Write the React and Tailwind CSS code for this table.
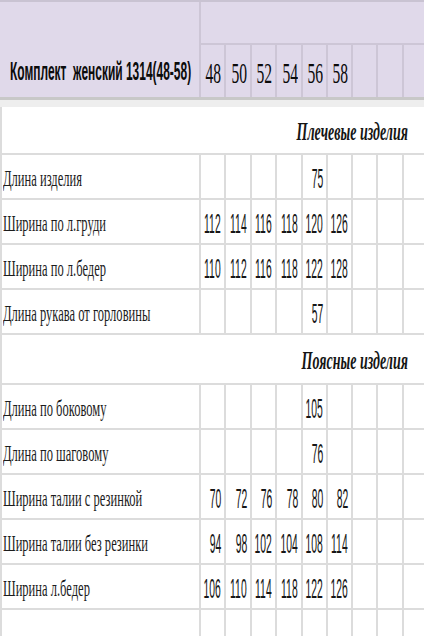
const sizes = ["48", "50", "52", "54", "56", "58"];

const grid = "grid grid-cols-[201px_25px_26px_25px_26px_25px_25px_25px_26px_1fr]";

const shoulder = [
  ["Длина изделия", ["", "", "", "", "75", ""]],
  ["Ширина по л.груди", ["112", "114", "116", "118", "120", "126"]],
  ["Ширина по л.бедер", ["110", "112", "116", "118", "122", "128"]],
  ["Длина рукава от горловины", ["", "", "", "", "57", ""]],
];

const waist = [
  ["Длина по боковому", ["", "", "", "", "105", ""]],
  ["Длина по шаговому", ["", "", "", "", "76", ""]],
  ["Ширина талии с резинкой", ["70", "72", "76", "78", "80", "82"]],
  ["Ширина талии без резинки", ["94", "98", "102", "104", "108", "114"]],
  ["Ширина л.бедер", ["106", "110", "114", "118", "122", "126"]],
];

function DataRow({ label, values, last }) {
  const cells = [...values, "", "", ""];
  return (
    <div className={`${grid} ${last ? "h-[30px]" : "h-[45px]"} border-b-2 border-[#dcdcdc]`}>
      <div className="flex items-center overflow-visible border-l-2 border-r-2 border-[#dcdcdc] pt-[5px] pl-[1px]">
        <span className="inline-block origin-left scale-x-[0.545] whitespace-nowrap font-['Liberation_Serif',serif] text-[23px] text-[#1c1c1c]">
          {label}
        </span>
      </div>
      {cells.map((v, i) => (
        <div key={i} className={`flex items-center justify-end pr-[3px] pt-[5px] ${i < 8 ? "border-r-2 border-[#dcdcdc]" : ""}`}>
          {v ? (
            <span className="inline-block origin-right scale-x-[0.37] font-['Liberation_Sans',sans-serif] text-[28px] leading-none text-[#161616]">
              {v}
            </span>
          ) : null}
        </div>
      ))}
    </div>
  );
}

function SectionRow({ title, h }) {
  return (
    <div className={`flex ${h} items-center justify-end border-b-2 border-l-2 border-[#dcdcdc] pr-[16px] pt-[4px]`}>
      <span className="inline-block origin-right scale-x-[0.56] whitespace-nowrap font-['Liberation_Serif',serif] text-[25px] font-bold italic text-[#151515]">
        {title}
      </span>
    </div>
  );
}

export default function App() {
  return (
    <div className="h-[636px] w-[424px] overflow-hidden bg-white">
      <div className="flex h-[97px] border-t-2 border-[#c9c3d2] bg-[#e0d9ea]">
        <div className="flex w-[201px] shrink-0 items-end border-r-2 border-[#cdc6d6] pb-[6px] pl-[10px]">
          <span className="inline-block origin-left scale-x-[0.46] whitespace-pre font-['Liberation_Sans',sans-serif] text-[26px] font-bold text-[#0c0c0c]">
            Комплект  женский 1314(48-58)
          </span>
        </div>
        <div className="flex flex-1 flex-col">
          <div className="h-[43px] border-b-2 border-[#cdc6d6]" />
          <div className="grid flex-1 grid-cols-[25px_26px_25px_26px_25px_25px_25px_26px_1fr]">
            {[...sizes, "", "", ""].map((s, i) => (
              <div key={i} className={`flex items-center justify-end pr-[3px] pt-[4px] ${i < 8 ? "border-r-2 border-[#cdc6d6]" : ""}`}>
                {s ? (
                  <span className="inline-block origin-right scale-x-[0.52] font-['Liberation_Serif',serif] text-[30px] leading-none text-[#0a0a0a]">
                    {s}
                  </span>
                ) : null}
              </div>
            ))}
          </div>
        </div>
      </div>
      <div className="h-[10px] border-t-[3px] border-[#c8c8c8] bg-[#eeeeee]" />
      <SectionRow title="Плечевые изделия" h="h-[48px]" />
      {shoulder.map(([label, values]) => (
        <DataRow key={label} label={label} values={values} />
      ))}
      <SectionRow title="Поясные изделия" h="h-[50px]" />
      {waist.map(([label, values]) => (
        <DataRow key={label} label={label} values={values} />
      ))}
      <DataRow label="" values={["", "", "", "", "", ""]} last />
    </div>
  );
}
